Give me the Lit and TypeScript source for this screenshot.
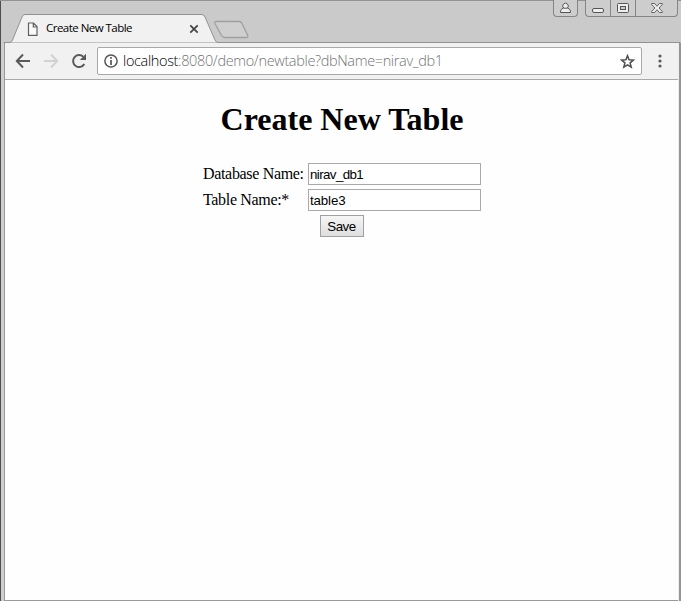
import { LitElement, html, css } from "lit";
import { customElement } from "lit/decorators.js";

@customElement("tab-strip")
class TabStrip extends LitElement {
  static styles = css`
    :host { display: block; position: relative; height: 43px; background: #cacaca; }
    .shape { position: absolute; left: 0; top: 0; display: block; }
    .row { position: relative; display: flex; align-items: flex-start; height: 43px; }
    .tab { display: flex; align-items: center; width: 172px; height: 16px; margin: 21px 0 0 27px; }
    .title { flex: 1; margin: -2px 0 0 8px; font: 11.5px/16px "Open Sans", "Noto Sans", sans-serif; color: #000; white-space: nowrap; }
    .title span { display: inline-block; letter-spacing: -0.53px; }
    .tab svg { display: block; flex: none; }
    .controls { display: flex; gap: 7px; margin: 0 3px 0 auto; }
    .group { display: flex; box-sizing: border-box; height: 17px; border: 1px solid #858585; border-top: 0; border-radius: 0 0 4px 4px; background: #cdcdcd; }
    .btn { display: flex; align-items: center; justify-content: center; height: 16px; box-sizing: border-box; }
    .btn + .btn { border-left: 1px solid #858585; }
    .user { width: 23px; }
    .min { width: 24px; }
    .max { width: 25px; }
    .close { width: 42px; }
  `;
  render() {
    return html`
      <svg class="shape" width="681" height="43" viewBox="0 0 681 43">
        <path d="M0 .5H681" stroke="#929292" />
        <path d="M.5 1V43" stroke="#4d4d4d" />
        <path d="M4 43V42.5H10Q11.5 42.5 12.5 40L22 17Q23 14.5 25 14.5H202Q204 14.5 205 17L215 40Q216 42.5 218 42.5H680V43Z" fill="#f1f1f1" stroke="#929292" />
        <path d="M216.5 21.5H239Q241 21.5 242 23.5L247.5 35Q248.7 37.5 246.5 37.5H225Q222.5 37.5 221.5 35.5L215 23.5Q214 21.5 216.5 21.5Z" fill="#cfcfcf" stroke="#a0a0a0" stroke-width="1.3" />
      </svg>
      <div class="row">
        <div class="tab">
          <svg width="11" height="14" viewBox="0 0 11 14"><path d="M1.5 1H6.5L10 4.5V13.3H1.5ZM6.3 1V5H10" fill="#fafafa" stroke="#606060" stroke-width="1.2" /></svg>
          <div class="title"><span>Create New Table</span></div>
          <svg width="10" height="10" viewBox="0 0 10 10"><path d="M1.3 1.3L8.7 8.7M8.7 1.3L1.3 8.7" stroke="#454545" stroke-width="1.8" /></svg>
        </div>
        <div class="controls">
          <div class="group"><div class="btn user">
            <svg width="11" height="12" viewBox="0 0 11 12"><path d="M3.5 6A2.8 2.8 0 1 1 7.5 6L9.5 7.2Q10.5 8 10.5 10.5H.5Q.5 8 1.5 7.2Z" fill="#eee" stroke="#555" /><path d="M3.5 6.2H7.5" stroke="#555" /></svg>
          </div></div>
          <div class="group">
            <div class="btn min"><svg width="12" height="16" viewBox="0 0 12 16"><rect x=".5" y="8.5" width="11" height="4" rx="1.5" fill="#eee" stroke="#555" /></svg></div>
            <div class="btn max"><svg width="12" height="16" viewBox="0 0 12 16"><rect x=".5" y="3.5" width="11" height="9" rx="1" fill="#eee" stroke="#555" /><rect x="3.5" y="6.5" width="5" height="3" fill="#ccc" stroke="#555" /></svg></div>
            <div class="btn close"><svg width="12" height="16" viewBox="0 0 12 16"><path d="M.7 3.5H3.6L6 6.2L8.4 3.5H11.3V4.5L8 8L11.3 11.5V12.5H8.4L6 9.8L3.6 12.5H.7V11.5L4 8L.7 4.5Z" fill="#eee" stroke="#555" stroke-width=".9" /></svg></div>
          </div>
        </div>
      </div>`;
  }
}

@customElement("nav-bar")
class NavBar extends LitElement {
  static styles = css`
    :host { display: flex; align-items: center; box-sizing: border-box; height: 37px; padding: 0 10px 0 10px; background: #f1f1f1; border-bottom: 1px solid #a9a9a9; }
    svg { display: block; flex: none; }
    .nav { display: flex; gap: 12px; margin-right: 10px; }
    .box { flex: 1; display: flex; align-items: center; box-sizing: border-box; height: 28px; padding: 0 6px; border: 1px solid #a8a8a8; border-radius: 2px; background: #fff; }
    .url { flex: 1; margin-left: 5px; white-space: nowrap; font: 300 14.5px/20px "Open Sans", "Noto Sans", sans-serif; letter-spacing: -0.36px; color: #737373; }
    .host { color: #000; }
    .menu { margin-left: 10px; }
  `;
  render() {
    return html`
      <div class="nav">
        <svg width="16" height="16" viewBox="0 0 16 16"><path d="M15 8H2M8 1.5L1.8 8L8 14.5" fill="none" stroke="#5a5a5a" stroke-width="2" /></svg>
        <svg width="16" height="16" viewBox="0 0 16 16"><path d="M1 8H14M8 1.5L14.2 8L8 14.5" fill="none" stroke="#d2d2d2" stroke-width="2" /></svg>
        <svg width="16" height="16" viewBox="0 0 16 16"><path d="M13.3 11A6 6 0 1 1 12.2 3.7" fill="none" stroke="#5a5a5a" stroke-width="2" /><path d="M15 .8V7H8.8Z" fill="#5a5a5a" /></svg>
      </div>
      <div class="box">
        <svg width="14" height="14" viewBox="0 0 14 14"><circle cx="7" cy="7" r="6.1" fill="none" stroke="#555" stroke-width="1.5" /><path d="M7 3V4.8M7 6V11" stroke="#555" stroke-width="1.7" /></svg>
        <div class="url"><span class="host">localhost</span><span>:8080/demo/newtable?dbName=nirav_db1</span></div>
        <svg width="15" height="15" viewBox="0 0 15 15"><path d="M7.5 1.7L9.1 5.8L13.5 6.1L10.1 8.9L11.2 13.2L7.5 10.8L3.8 13.2L4.9 8.9L1.5 6.1L5.9 5.8Z" fill="none" stroke="#4e4e4e" stroke-width="1.5" /></svg>
      </div>
      <svg class="menu" width="16" height="16" viewBox="0 0 16 16"><g fill="#5a5a5a"><circle cx="8" cy="3" r="1.6" /><circle cx="8" cy="8" r="1.6" /><circle cx="8" cy="13" r="1.6" /></g></svg>`;
  }
}

@customElement("app-root")
class AppRoot extends LitElement {
  static styles = css`
    :host { display: block; width: 681px; height: 601px; overflow: hidden; background: #cacaca; }
    .window { display: flex; flex-direction: column; box-sizing: border-box; height: 601px; background: #cacaca; }
    .frame { flex: 1; display: flex; min-height: 0; }
    .left { width: 5px; box-sizing: border-box; border-left: 1px solid #4d4d4d; border-right: 1px solid #999; background: #d0cdcb; }
    .right { width: 3px; box-sizing: border-box; border-left: 1px solid #ececec; background: #969696; }
    .body { flex: 1; display: flex; flex-direction: column; }
    .page { flex: 1; box-sizing: border-box; background: #fefefe; border-bottom: 1px solid #999; color: #000; font-family: "Liberation Serif", serif; }
    h1 { margin: 21px 0 25px 1px; font-size: 32px; line-height: 37px; text-align: center; }
    .form { display: grid; grid-template-columns: 101px 173px; column-gap: 4px; row-gap: 4px; margin-left: 198px; align-items: center; }
    .label { font-size: 16px; line-height: 22px; white-space: nowrap; }
    .label span { display: inline-block; letter-spacing: -0.33px; }
    input { box-sizing: border-box; width: 173px; height: 22px; margin: 0; padding: 1px; border: 1px solid #a9a9a9; border-radius: 0; outline: 0; background: #fff; color: #000; font: 13.33px "Liberation Sans", sans-serif; letter-spacing: -0.15px; }
    .tight { letter-spacing: -0.6px; }
    button { grid-column: 1 / -1; justify-self: center; box-sizing: border-box; width: 44px; height: 22px; margin: 0 1px 0 0; padding: 0; border: 1px solid #a0a0a0; border-radius: 0; background: linear-gradient(#f6f6f6, #dedede); color: #000; font: 13.33px "Liberation Sans", sans-serif; letter-spacing: -0.5px; }
  `;
  render() {
    return html`
      <div class="window">
        <tab-strip></tab-strip>
        <div class="frame">
          <div class="left"></div>
          <div class="body">
            <nav-bar></nav-bar>
            <div class="page">
              <h1>Create New Table</h1>
              <div class="form">
                <div class="label"><span>Database Name:</span></div><input class="tight" .value=${"nirav_db1"} />
                <div class="label"><span>Table Name:*</span></div><input .value=${"table3"} />
                <button>Save</button>
              </div>
            </div>
          </div>
          <div class="right"></div>
        </div>
      </div>`;
  }
}
